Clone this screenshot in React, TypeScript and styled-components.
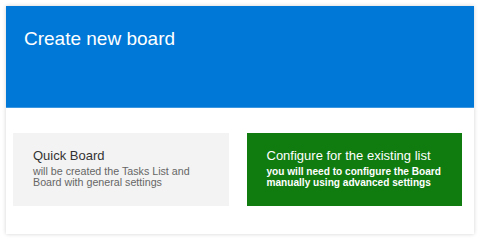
import React from "react";
import styled, { createGlobalStyle } from "styled-components";

const Global = createGlobalStyle`
  html, body { margin: 0; padding: 0; background: #ffffff; }
  body { font-family: "Liberation Sans", Arial, sans-serif; }
`;

const Panel = styled.div`
  margin: 6px;
  width: 468px;
  height: 228px;
  background: #ffffff;
  box-shadow: 0 0 4px rgba(0, 0, 0, 0.18);
  display: flex;
  flex-direction: column;
`;

const Header = styled.div`
  background: #0078d7;
  border-bottom: 1px solid #3d97e0;
  padding: 22px 18px 0;
  box-sizing: border-box;
  height: 102px;
`;

const Title = styled.h1`
  margin: 0;
  font-size: 19px;
  line-height: 22px;
  font-weight: normal;
  color: #ffffff;
`;

const Options = styled.div`
  display: flex;
  gap: 18px;
  padding: 25px 12px 28px 7px;
`;

const Card = styled.div<{ $tone: "neutral" | "primary" }>`
  flex: 1;
  min-width: 0;
  height: 73px;
  box-sizing: border-box;
  padding: 15px 20px 0;
  background: ${(p) => (p.$tone === "primary" ? "#107c10" : "#f3f3f3")};
  color: ${(p) => (p.$tone === "primary" ? "#ffffff" : "#333333")};
  cursor: pointer;
`;

const CardTitle = styled.div`
  font-size: 13px;
  line-height: 15px;
  white-space: nowrap;
`;

const CardText = styled.div<{ $tone: "neutral" | "primary" }>`
  margin-top: 3px;
  font-size: ${(p) => (p.$tone === "primary" ? "10.1px" : "10.7px")};
  font-weight: ${(p) => (p.$tone === "primary" ? "bold" : "normal")};
  line-height: 11px;
  white-space: nowrap;
  color: ${(p) => (p.$tone === "primary" ? "#ffffff" : "#666666")};
`;

export default function App() {
  return (
    <>
      <Global />
      <Panel>
        <Header>
          <Title>Create new board</Title>
        </Header>
        <Options>
          <Card $tone="neutral">
            <CardTitle>Quick Board</CardTitle>
            <CardText $tone="neutral">
              will be created the Tasks List and
              <br />
              Board with general settings
            </CardText>
          </Card>
          <Card $tone="primary">
            <CardTitle>Configure for the existing list</CardTitle>
            <CardText $tone="primary">
              you will need to configure the Board
              <br />
              manually using advanced settings
            </CardText>
          </Card>
        </Options>
      </Panel>
    </>
  );
}
